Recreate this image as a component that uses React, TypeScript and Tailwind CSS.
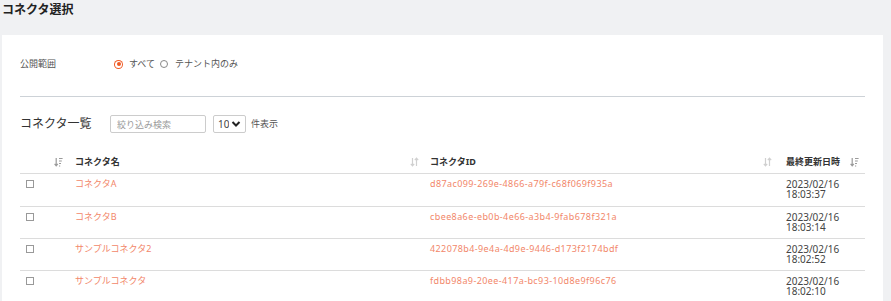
import React from "react";

const rows = [
  { name: "コネクタA", id: "d87ac099-269e-4866-a79f-c68f069f935a", date: "2023/02/16", time: "18:03:37" },
  { name: "コネクタB", id: "cbee8a6e-eb0b-4e66-a3b4-9fab678f321a", date: "2023/02/16", time: "18:03:14" },
  { name: "サンプルコネクタ2", id: "422078b4-9e4a-4d9e-9446-d173f2174bdf", date: "2023/02/16", time: "18:02:52" },
  { name: "サンプルコネクタ", id: "fdbb98a9-20ee-417a-bc93-10d8e9f96c76", date: "2023/02/16", time: "18:02:10" },
];

// unsorted column indicator
function SortBoth() {
  return (
    <svg width="9" height="10" viewBox="0 0 9 10" className="shrink-0">
      <g stroke="#d0d0d0" strokeWidth="1.2" fill="none">
        <path d="M2.5 1v7.5M0.8 6.8l1.7 2 1.7-2" />
        <path d="M6.5 9V1.5M4.8 3.2l1.7-2 1.7 2" />
      </g>
    </svg>
  );
}

// sorted (desc) indicator
function SortDesc() {
  return (
    <svg width="9" height="10" viewBox="0 0 9 10" className="shrink-0">
      <g stroke="#9a9a9a" strokeWidth="1.2" fill="none">
        <path d="M2.2 1v7.5M0.6 6.8l1.6 2 1.6-2" />
        <path d="M5 1.5h3.6M5 4h2.8M5 6.5h2M5 9h1.2" />
      </g>
    </svg>
  );
}

export default function App() {
  return (
    <div
      className="w-[891px] h-[301px] overflow-hidden bg-[#f0f1f3] text-[#333]"
      style={{ fontFamily: '"Noto Sans", "Noto Sans CJK JP", sans-serif' }}
    >
      <div className="h-[35px] pl-[2px] pt-[2px]">
        <h1 className="text-[12px] leading-[16px] font-bold text-[#222]">コネクタ選択</h1>
      </div>

      <div className="ml-[2px] w-[881px] bg-white px-[18px] pt-[20px] h-[266px]">
        {/* 公開範囲 */}
        <div className="flex items-center h-[18px] text-[9px] text-[#555]">
          <span className="w-[94px]">公開範囲</span>
          <span className="w-[9px] h-[9px] rounded-full bg-[#ef5a24] flex items-center justify-center">
            <span className="w-[7px] h-[7px] rounded-full bg-white flex items-center justify-center">
              <span className="w-[4px] h-[4px] rounded-full bg-[#ef5a24]" />
            </span>
          </span>
          <span className="ml-[6px]">すべて</span>
          <span className="ml-[5px] w-[8px] h-[8px] rounded-full border border-[#888]" />
          <span className="ml-[7px]">テナント内のみ</span>
        </div>

        <div className="mt-[23px] h-px bg-[#cdd2d7]" />

        {/* 一覧ヘッダー */}
        <div className="mt-[18px] flex items-center h-[18px]">
          <span className="w-[90px] text-[12px] leading-[16px] text-[#333]">コネクタ一覧</span>
          <input
            placeholder="絞り込み検索"
            className="w-[96px] h-[18px] border border-[#ccc] rounded-[2px] px-[6px] text-[9px] placeholder:text-[#9a9a9a] outline-none"
          />
          <div className="ml-[7px] w-[33px] h-[18px] border border-[#ccc] rounded-[2px] flex items-center pl-[4px]">
            <span className="w-[11px] overflow-hidden text-[10px] leading-[12px] text-[#444] whitespace-nowrap">10</span>
            <svg width="10" height="8" viewBox="0 0 10 8" className="ml-[2px]">
              <path d="M1.5 2l3.5 3.5 3.5-3.5" stroke="#222" strokeWidth="2" fill="none" />
            </svg>
          </div>
          <span className="ml-[5px] text-[9px] text-[#555]">件表示</span>
        </div>

        {/* テーブル */}
        <div className="mt-[19px] w-[845px]">
          <div className="grid grid-cols-[50px_355px_355px_85px] h-[22px] border-b border-[#dcdcdc] text-[9px] font-bold text-[#333]">
            <div className="flex items-center justify-end pr-[7px] pb-[2px]">
              <SortDesc />
            </div>
            <div className="flex items-center justify-between pl-[5px] pr-[6px] pb-[2px]">
              <span>コネクタ名</span>
              <SortBoth />
            </div>
            <div className="flex items-center justify-between pl-[5px] pr-[8px] pb-[2px]">
              <span>コネクタID</span>
              <SortBoth />
            </div>
            <div className="flex items-center justify-between pl-[6px] pr-[6px] pb-[2px]">
              <span>最終更新日時</span>
              <SortDesc />
            </div>
          </div>

          {rows.map((r, i) => (
            <div
              key={r.id}
              className={
                "grid grid-cols-[50px_355px_355px_85px] h-[32px] pt-[5px] text-[9px] " +
                (i > 0 ? "border-t border-[#dcdcdc]" : "")
              }
            >
              <div className="pl-[6px] pt-[1px]">
                <span className="block w-[8px] h-[8px] border border-[#999] bg-white" />
              </div>
              <div className="pl-[5px] leading-[10px] text-[#f2876a]">{r.name}</div>
              <div className="pl-[5px] leading-[10px] tracking-[0.4px] text-[#f2876a]">{r.id}</div>
              <div className="pl-[6px] text-[10px] leading-[10px] text-[#444]">
                <div className="h-[10px]">{r.date}</div>
                <div className="h-[10px]">{r.time}</div>
              </div>
            </div>
          ))}
        </div>
      </div>
    </div>
  );
}
